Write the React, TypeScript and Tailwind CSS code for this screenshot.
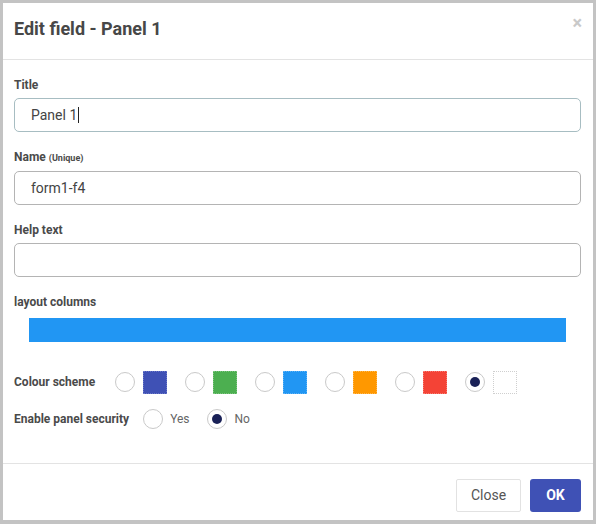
import React from "react";

const font = { fontFamily: "Roboto, 'Liberation Sans', sans-serif" };

function Field({ label, hint, value, focused, caret }: { label: string; hint?: string; value?: string; focused?: boolean; caret?: boolean }) {
  return (
    <div className="mb-[17px]">
      <div className="mb-[5px] text-[12px] font-bold leading-[16px] text-[#4a4a4a]">
        {label}
        {hint && <span className="ml-[3px] text-[9px]">{hint}</span>}
      </div>
      <div
        className={`flex h-[34px] items-center rounded-[5px] border px-[16px] text-[14px] text-[#444] ${
          focused ? "border-[#a7bdc2]" : "border-[#b4b4b4]"
        }`}
      >
        {value}
        {caret && <span className="ml-[1px] inline-block h-[16px] w-px bg-[#222]" />}
      </div>
    </div>
  );
}

function Radio({ checked }: { checked?: boolean }) {
  return (
    <span className="flex h-[20px] w-[20px] shrink-0 items-center justify-center rounded-full border border-[#c9c9c9] bg-white">
      {checked && <span className="h-[10px] w-[10px] rounded-full bg-[#1a2157]" />}
    </span>
  );
}

const swatches = [
  { color: "bg-[#3f51b5] border-[#6a78c8]", checked: false },
  { color: "bg-[#4caf50] border-[#7cc47f]", checked: false },
  { color: "bg-[#2196f3] border-[#5db2f6]", checked: false },
  { color: "bg-[#ff9800] border-[#ffb64d]", checked: false },
  { color: "bg-[#f44336] border-[#f77b72]", checked: false },
  { color: "bg-white border-[#cfcfcf]", checked: true },
];

export default function App() {
  return (
    <div className="h-[524px] w-[596px] bg-[#c3c3c3] p-[3px] pb-[4px]" style={font}>
      <div className="flex h-full flex-col bg-white">
        <div className="relative h-[57px] shrink-0 border-b border-[#e3e3e3] px-[11px] pt-[15px]">
          <h1 className="text-[18px] font-bold leading-[22px] text-[#474747]">Edit field - Panel 1</h1>
          <span className="absolute right-[11px] top-[10px] text-[18px] font-bold leading-[20px] text-[#c9c9c9]">×</span>
        </div>

        <div className="flex-1 px-[11px] pr-[12px] pt-[17px]">
          <Field label="Title" value="Panel 1" focused caret />
          <Field label="Name" hint="(Unique)" value="form1-f4" />
          <Field label="Help text" />

          <div className="text-[12px] font-bold leading-[16px] text-[#4a4a4a]">layout columns</div>
          <div className="mx-[15px] mt-[8px] h-[24px] bg-[#2196f3]" />

          <div className="mt-[28px] flex h-[24px] items-center">
            <span className="mr-[20px] text-[12px] font-bold text-[#4a4a4a]">Colour scheme</span>
            {swatches.map((s, i) => (
              <div key={i} className="mr-[18px] flex items-center gap-[8px]">
                <Radio checked={s.checked} />
                <span className={`h-[23px] w-[24px] border border-dotted ${s.color}`} />
              </div>
            ))}
          </div>

          <div className="mt-[14px] flex h-[22px] items-center text-[12px]">
            <span className="mr-[14px] font-bold text-[#4a4a4a]">Enable panel security</span>
            <Radio />
            <span className="ml-[7px] mr-[17px] text-[#666]">Yes</span>
            <Radio checked />
            <span className="ml-[8px] text-[#666]">No</span>
          </div>
        </div>

        <div className="flex h-[57px] shrink-0 items-start justify-end gap-[9px] border-t border-[#e3e3e3] pr-[12px] pt-[15px]">
          <button className="h-[33px] w-[65px] rounded-[2px] border border-[#e2e2e2] bg-white text-[14px] text-[#555]">Close</button>
          <button className="h-[33px] w-[51px] rounded-[3px] bg-[#3f51b5] text-[14px] font-bold text-white">OK</button>
        </div>
      </div>
    </div>
  );
}
